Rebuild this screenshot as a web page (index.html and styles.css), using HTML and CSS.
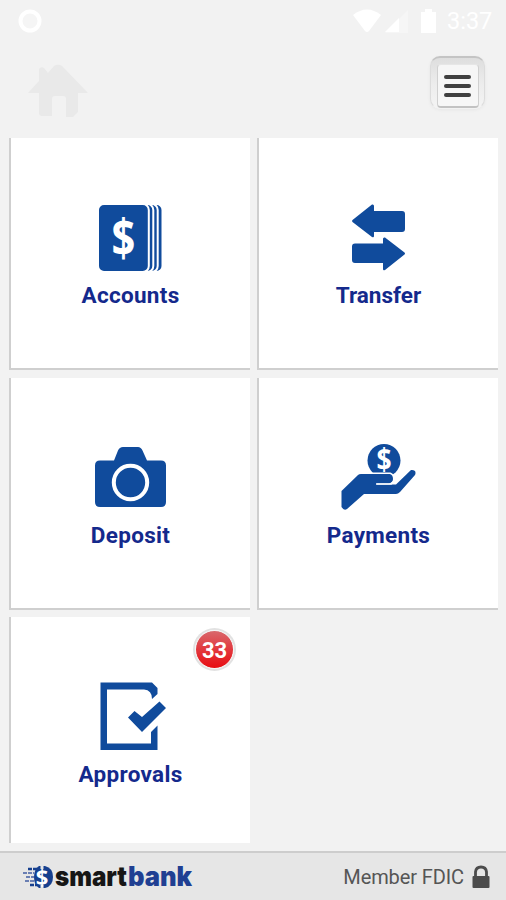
FILE: index.html
```
<!DOCTYPE html>
<html lang="en">
<head>
  <meta charset="UTF-8">
  <meta name="viewport" content="width=device-width, initial-scale=1.0">
  <title>SmartBank</title>
  <link rel="stylesheet" href="styles.css">
</head>
<body>
  <div class="status">
    <svg class="ring" width="26" height="26" viewBox="17 8 26 26">
      <circle cx="30" cy="21" r="9.5" fill="#f5f5f5" stroke="#fff" stroke-width="4"/>
    </svg>
    <svg width="88" height="28" viewBox="350 6 88 28" fill="#fff">
      <path d="M353 14Q367 3 381 14L369 30Q367 32 365 30Z"/>
      <path d="M385 32L408 9V32Z" fill="#f6f6f6"/>
      <path d="M385 31L399 17V31Z"/>
      <path d="M421 11H425V8H432V11H436V32H421Z"/>
    </svg>
    <span class="time">3:37</span>
  </div>

  <header class="header">
    <svg width="62" height="54" viewBox="27 64 62 54" fill="#e9e9e9">
      <path d="M28 93L39 81V69Q41 66 44 68L48 73L54 66Q58 63.500 62 66L88 93H78V112L73 117H66V99Q66 96 63 96H55Q52 96 52 99V116H42Q39 116 39 113V93Z"/>
    </svg>
    <button class="menu" aria-label="Menu">
      <span class="menu-face"><i></i><i></i><i></i></span>
    </button>
  </header>

  <main class="tiles">
    <a class="tile" href="#">
      <svg width="81" height="76" viewBox="90 200 81 76">
        <g fill="#104b9c" stroke="#fff" stroke-width="2">
          <rect x="111" y="204" width="51.500" height="68" rx="6"/>
          <rect x="106" y="204" width="51.700" height="68" rx="6"/>
          <rect x="102" y="204" width="51.300" height="68" rx="6"/>
          <rect x="98" y="204" width="50.800" height="68" rx="6"/>
        </g>
        <text class="dollar" transform="translate(123.500 257) scale(0.800 1)" font-size="52">$</text>
      </svg>
      <span class="label">Accounts</span>
    </a>

    <a class="tile" href="#">
      <svg width="81" height="76" viewBox="338 200 81 76" fill="#104b9c">
        <path d="M352.500 220L372 204.500Q374 204 374 206V211H402Q405 211 405 214V229Q405 232 402 232H374V236Q374 238 372 237L352.500 222Q351.500 221 352.500 220Z"/>
        <path d="M404.500 252.500L385 237.500Q383 237 383 239V243.500H355Q352 243.500 352 246.500V260Q352 263 355 263H383V269Q383 271 385 270L404.500 254.500Q405.500 253.500 404.500 252.500Z"/>
      </svg>
      <span class="label transfer">Transfer</span>
    </a>

    <a class="tile" href="#">
      <svg width="81" height="76" viewBox="90 440 81 76">
        <path d="M100 460.500H114L118 450.500Q119.500 447 123 447H138Q141 447 142.500 450.500L147 460.500H161Q166 460.500 166 465.500V502Q166 507 161 507H100Q95 507 95 502V465.500Q95 460.500 100 460.500Z" fill="#104b9c"/>
        <circle cx="130.500" cy="482.500" r="16.700" fill="none" stroke="#fff" stroke-width="4"/>
      </svg>
      <span class="label">Deposit</span>
    </a>

    <a class="tile" href="#">
      <svg width="81" height="76" viewBox="338 440 81 76">
        <circle cx="384" cy="460.500" r="16.500" fill="#104b9c"/>
        <text class="dollar" transform="translate(384 470) scale(0.880 1)" font-size="30">$</text>
        <path d="M341.500 491L358 475Q359 474 361 474H390Q393 475 393 479Q393 482 389 483.500H377V484.500H396L411 470Q413 469.500 415 471Q416 473 415 475L400 492Q398 494 396 494H364L347 509Q344 511 341.500 507Z" fill="#104b9c" stroke="#fff" stroke-width="3" paint-order="stroke"/>
        <path d="M376 484H391Q395 482 394 476" fill="none" stroke="#fff" stroke-width="1.500"/>
      </svg>
      <span class="label">Payments</span>
    </a>

    <a class="tile last" href="#">
      <span class="badge">33</span>
      <svg width="81" height="76" viewBox="90 679 81 76" fill="#104b9c">
        <path d="M100.500 682.500H152L157.500 688V694L152 699Q152 690 144 689.500H107V743.500H151V732L157.500 725.500V750H100.500Z"/>
        <path d="M128 717.500L134.500 711L142 717L159.500 701.500L166 708L142 732Z"/>
      </svg>
      <span class="label">Approvals</span>
    </a>
  </main>

  <footer class="footer">
    <svg class="logo" width="178" height="44" viewBox="22 854 178 44">
      <path d="M39 865H45Q53 867 53 876Q53 885 45 887H39Q34 884 34 876Q34 868 39 865Z" fill="#17408f"/>
      <path d="M28 868H37M30 884H37" stroke="#17408f" stroke-width="2.500" stroke-dasharray="4 1"/>
      <path d="M23 872H34M26 876H34M25 880H34" stroke="#6a7fb3" stroke-width="2" stroke-dasharray="4 1"/>
      <path d="M42 863V868M42 884V889" stroke="#e6e6e6" stroke-width="3"/>
      <text class="dollar" x="42" y="883.500" font-size="22">$</text>
      <text class="brand" x="55" y="885" textLength="72" lengthAdjust="spacingAndGlyphs">smart</text>
      <text class="brand bank" x="128" y="885" textLength="64" lengthAdjust="spacingAndGlyphs">bank</text>
    </svg>
    <span class="member">Member FDIC</span>
    <svg class="lock" width="18" height="24" viewBox="472 864 18 24">
      <path d="M475.500 876V871Q476 866 481 866Q486 866 486.500 871V876" fill="none" stroke="#4c4c4c" stroke-width="2.800"/>
      <rect x="472.500" y="875" width="17" height="12" rx="1" fill="#4c4c4c"/>
    </svg>
  </footer>
</body>
</html>
```
FILE: styles.css
```
* {
  box-sizing: border-box;
}
body {
  margin: 0;
  height: 900px;
  display: flex;
  flex-direction: column;
  overflow: hidden;
  font-family: Roboto, sans-serif;
  background-color: #f2f2f2;
}
svg {
  display: block;
}
.status {
  height: 42px;
  padding: 0 13px 0 17px;
  display: flex;
  align-items: center;
}
.ring {
  margin-right: auto;
}
.time {
  margin-left: 9px;
  width: 46px;
  font-size: 23.5px;
  color: #fff;
}
.header {
  height: 96px;
  padding: 14px 21px 0 27px;
  display: flex;
  justify-content: space-between;
  align-items: flex-start;
}
.header svg {
  margin-top: 8px;
}
.menu {
  width: 55px;
  height: 53px;
  padding: 6px 5px 0 6px;
  border: 1px solid #dcdcdc;
  border-top: 2px solid #c4c4c4;
  border-bottom-color: #f2f2f2;
  border-radius: 10px;
  background: linear-gradient(#dedede, #ececec 50%, #f4f4f4);
  box-shadow: 0 1px 3px #e6e6e6;
}
.menu-face {
  height: 100%;
  display: flex;
  flex-direction: column;
  justify-content: center;
  align-items: center;
  gap: 5px;
  padding-right: 2px;
  border: 1px solid #d0d0d0;
  border-top-color: #e6e6e6;
  border-bottom: 2px solid #c2c2c2;
  border-radius: 4px;
  background-color: #f6f6f6;
}
.menu-face i {
  width: 27px;
  height: 4px;
  border-radius: 2px;
  background-color: #404040;
}
.tiles {
  padding: 0 8px 0 9px;
  display: grid;
  grid-template-columns: 241px 241px;
  grid-template-rows: 232px 232px 226px;
  column-gap: 7px;
  row-gap: 7.5px;
}
.tile {
  position: relative;
  padding-top: 62px;
  display: flex;
  flex-direction: column;
  align-items: center;
  border-left: 2px solid #cfcfcf;
  border-bottom: 2px solid #cfcfcf;
  background-color: #fff;
  text-decoration: none;
}
.tile.last {
  border-bottom: none;
}
.dollar {
  font-family: "Open Sans", sans-serif;
  font-weight: 700;
  fill: #fff;
  text-anchor: middle;
}
.label {
  margin-top: 6px;
  font-size: 22.5px;
  line-height: 26px;
  font-weight: 700;
  letter-spacing: 0.3px;
  color: #14298c;
}
.label.transfer {
  letter-spacing: 0;
}
.badge {
  position: absolute;
  top: 13px;
  right: 16px;
  width: 39px;
  height: 39px;
  border: 1px solid #f4f4f4;
  border-radius: 50%;
  background: linear-gradient(#d9686c, #e2383e 50%, #e80d12);
  box-shadow: 0 0 0 2px #e2e2e2;
  font-size: 22px;
  line-height: 39px;
  font-weight: 700;
  text-align: center;
  color: #fff;
}
.footer {
  margin-top: auto;
  height: 49px;
  padding: 0 16px 0 22px;
  display: flex;
  align-items: center;
  border-top: 2px solid #cdcdcd;
  background-color: #e6e6e6;
}
.logo {
  margin-right: auto;
}
.brand {
  font-family: Inter, sans-serif;
  font-weight: 900;
  font-size: 27px;
  fill: #161616;
}
.brand.bank {
  fill: #203f92;
}
.member {
  font-size: 20px;
  letter-spacing: -0.1px;
  color: #555;
}
.lock {
  margin-left: 8px;
}
```
